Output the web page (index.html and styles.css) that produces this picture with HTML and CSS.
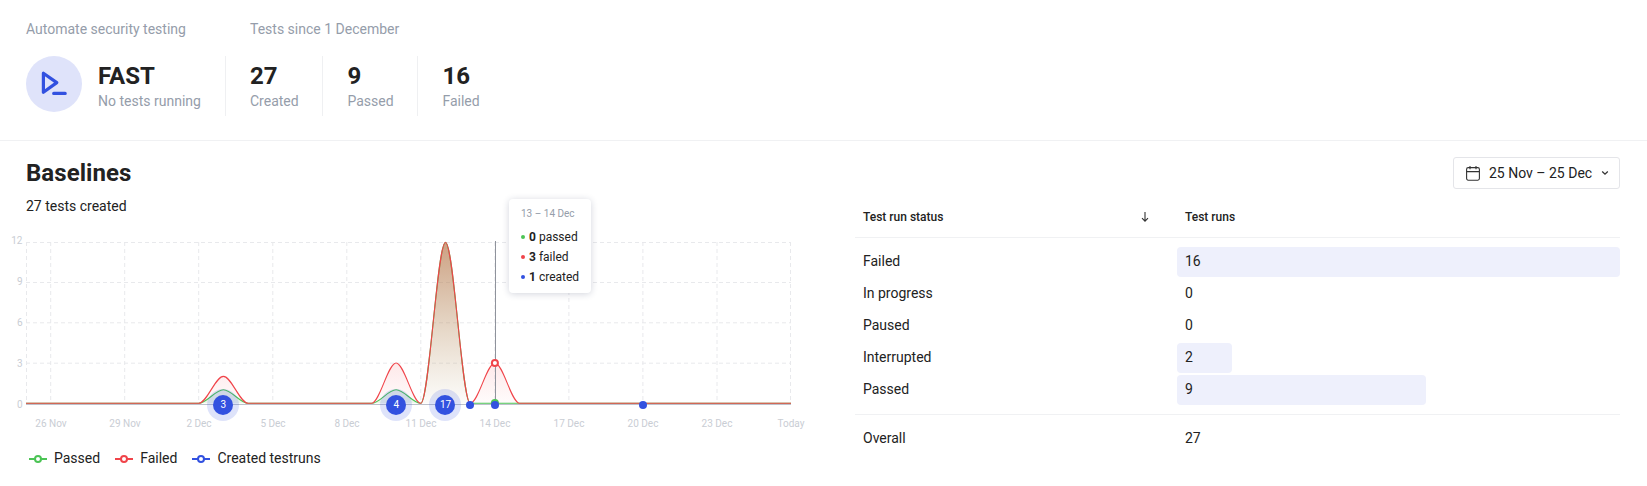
FILE: index.html
```html
<!DOCTYPE html>
<html lang="en">
<head>
<meta charset="utf-8">
<title>FAST dashboard</title>
<link rel="stylesheet" href="styles.css">
</head>
<body>
<header class="summary">
  <section class="summary-group product">
    <p class="caption">Automate security testing</p>
    <div class="stats">
      <div class="stat stat-product">
        <svg class="logo" width="56" height="56" viewBox="0 0 56 56" fill="none" stroke="#3251e0" stroke-width="3.2" stroke-linecap="round" stroke-linejoin="round">
          <circle cx="28" cy="28" r="28" fill="#dfe3fa" stroke="none"/>
          <path d="M17.4 17.2 30.8 26.6 17.4 36.2ZM27.7 37.4H39.2"/>
        </svg>
        <div><h2 class="value">FAST</h2><p class="name">No tests running</p></div>
      </div>
    </div>
  </section>
  <section class="summary-group">
    <p class="caption tests">Tests since 1 December</p>
    <div class="stats">
      <div class="stat"><h2 class="value">27</h2><p class="name">Created</p></div>
      <div class="stat"><h2 class="value">9</h2><p class="name">Passed</p></div>
      <div class="stat"><h2 class="value">16</h2><p class="name">Failed</p></div>
    </div>
  </section>
</header>
<main class="content">
  <section class="baselines">
    <h1 class="title">Baselines</h1>
    <p class="subtitle">27 tests created</p>
    <div class="chart">
      <svg class="plot" width="820" height="210" viewBox="0 225 820 210">
        <defs>
          <linearGradient id="lowfill" gradientUnits="userSpaceOnUse" x1="0" y1="363" x2="0" y2="403"><stop offset="0" stop-color="#f0444a" stop-opacity=".12"/><stop offset="1" stop-color="#f0444a" stop-opacity=".02"/></linearGradient>
          <linearGradient id="peakfill" gradientUnits="userSpaceOnUse" x1="0" y1="242" x2="0" y2="403"><stop offset="0" stop-color="#b97a50" stop-opacity=".72"/><stop offset="1" stop-color="#b9a070" stop-opacity=".04"/></linearGradient>
        </defs>
        <g class="grid-h">
          <path d="M26 242.5H791M26 282.5H791M26 322.8H791M26 363.2H791"/>
        </g>
        <g class="grid-v">
          <path d="M50.7 242V403M124.7 242V403M198.7 242V403M272.8 242V403M346.8 242V403M420.8 242V403M494.9 242V403M568.9 242V403M642.9 242V403M717 242V403"/>
          <path class="edge" d="M26.5 242V403M790.5 242V403"/>
        </g>
        <path class="axis" d="M26 404.5H791"/>
        <path fill="#4cc455" fill-opacity=".1" d="M198.7 403.3C206.9 403.3 215.2 390 223.4 390S239.9 403.3 248.1 403.3ZM371.5 403.3C379.7 403.3 387.9 390 396.1 390S412.6 403.3 420.8 403.3Z"/>
        <path fill="url(#lowfill)" d="M198.7 403.3C206.9 403.3 215.2 376.4 223.4 376.4S239.9 403.3 248.1 403.3ZM371.5 403.3C379.7 403.3 387.9 363 396.1 363S412.6 403.3 420.8 403.3ZM470.2 403.3C478.4 403.3 486.7 363 494.9 363S511.4 403.3 519.6 403.3Z"/>
        <path fill="url(#peakfill)" d="M420.8 403.3C429 403.3 437.3 242.3 445.5 242.3S462 403.3 470.2 403.3Z"/>
        <path class="passed-line" d="M26 403.3H198.7C206.9 403.3 215.2 389.8 223.4 389.8S239.9 403.3 248.1 403.3H371.5C379.7 403.3 387.9 389.8 396.1 389.8S412.6 403.3 420.8 403.3C429 403.3 437.3 242.3 445.5 242.3S462 403.3 470.2 403.3H791"/>
        <path class="failed-line" d="M26 403.3H198.7C206.9 403.3 215.2 376.4 223.4 376.4S239.9 403.3 248.1 403.3H371.5C379.7 403.3 387.9 363 396.1 363S412.6 403.3 420.8 403.3C429 403.3 437.3 242.3 445.5 242.3S462 403.3 470.2 403.3C478.4 403.3 486.7 363 494.9 363S511.4 403.3 519.6 403.3H791"/>
        <path class="cursor" d="M495.5 241V404"/>
        <circle cx="494.9" cy="403" r="4" fill="#4cc455"/>
        <circle cx="494.9" cy="363" r="3" fill="#fff" stroke="#f0444a" stroke-width="2"/>
        <g class="halo"><circle cx="223" cy="405" r="16"/><circle cx="396" cy="405" r="16"/><circle cx="445" cy="405" r="16"/></g>
        <g class="dot"><circle cx="223" cy="405" r="10"/><circle cx="396" cy="405" r="10"/><circle cx="445" cy="405" r="10"/><circle cx="470" cy="405" r="4"/><circle cx="495" cy="405" r="4"/><circle cx="643" cy="405" r="4"/></g>
        <g class="count"><text x="223.3" y="408">3</text><text x="396.2" y="408">4</text><text x="445.5" y="408">17</text></g>
        <g class="y-labels"><text x="22.5" y="244">12</text><text x="22.5" y="285">9</text><text x="22.5" y="326">6</text><text x="22.5" y="367">3</text><text x="22.5" y="408">0</text></g>
        <g class="x-labels"><text x="51" y="427">26 Nov</text><text x="125" y="427">29 Nov</text><text x="199" y="427">2 Dec</text><text x="273" y="427">5 Dec</text><text x="347" y="427">8 Dec</text><text x="421" y="427">11 Dec</text><text x="495" y="427">14 Dec</text><text x="569" y="427">17 Dec</text><text x="643" y="427">20 Dec</text><text x="717" y="427">23 Dec</text><text x="791" y="427">Today</text></g>
      </svg>
      <div class="tooltip">
        <p class="tooltip-date">13 – 14 Dec</p>
        <p class="tooltip-row passed"><b>0</b> passed</p>
        <p class="tooltip-row failed"><b>3</b> failed</p>
        <p class="tooltip-row created"><b>1</b> created</p>
      </div>
    </div>
    <ul class="legend">
      <li class="passed"><svg width="18" height="8"><path d="M0 4H18"/><circle cx="9" cy="4" r="3"/></svg>Passed</li>
      <li class="failed"><svg width="18" height="8"><path d="M0 4H18"/><circle cx="9" cy="4" r="3"/></svg>Failed</li>
      <li class="created"><svg width="18" height="8"><path d="M0 4H18"/><circle cx="9" cy="4" r="3"/></svg>Created testruns</li>
    </ul>
  </section>
  <section class="runs">
    <button class="period">
      <svg width="14" height="15" viewBox="0 0 14 15" fill="none" stroke="#333" stroke-width="1.1"><rect x=".6" y="1.6" width="12.8" height="12.6" rx="1.6"/><path d="M.6 5.6H13.4M4 0V3.2M10 0V3.2"/></svg>
      <span>25 Nov – 25 Dec</span>
      <svg width="8" height="6" viewBox="0 0 8 6" fill="none" stroke="#333" stroke-width="1.3"><path d="M1.2 1.6 4 4.2 6.8 1.6"/></svg>
    </button>
    <div class="table">
      <div class="row head"><span class="status">Test run status<svg class="sort" width="8" height="10" viewBox="0 0 8 10" fill="none" stroke="#333" stroke-width="1.1"><path d="M4 0V9M1 6.2 4 9.2 7 6.2"/></svg></span><span class="cell">Test runs</span></div>
      <div class="rows">
        <div class="row"><span class="status">Failed</span><span class="cell bar" style="width:443px">16</span></div>
        <div class="row"><span class="status">In progress</span><span class="cell">0</span></div>
        <div class="row"><span class="status">Paused</span><span class="cell">0</span></div>
        <div class="row"><span class="status">Interrupted</span><span class="cell bar" style="width:55px">2</span></div>
        <div class="row"><span class="status">Passed</span><span class="cell bar" style="width:249px">9</span></div>
      </div>
      <div class="row total"><span class="status">Overall</span><span class="cell">27</span></div>
    </div>
  </section>
</main>
</body>
</html>
```
FILE: styles.css
```css
* { box-sizing: border-box; margin: 0; padding: 0; }
body { width: 1647px; height: 486px; overflow: hidden; background: #fff; color: #222; font: 14px/20px Roboto, sans-serif; }
svg { display: block; flex: none; }

.summary { display: flex; height: 141px; padding: 19px 26px 0; border-bottom: 1px solid #f0f1f3; }
.product { width: 199px; }
.caption, .name { color: #959daa; white-space: nowrap; }
.caption.tests { padding-left: 25px; }
.stats { display: flex; margin-top: 17px; }
.stat { height: 60px; padding: 4px 23.8px 0 24px; border-left: 1px solid #eff0f2; }
.stat-product { display: flex; gap: 16px; padding: 4px 0 0; border: 0; }
.logo { margin-top: -4px; }
.value { font-size: 24px; line-height: 32px; font-weight: 700; }
.name { margin-top: -1px; }

.content { display: flex; height: 345px; }
.baselines { width: 855px; padding-top: 16px; }
.title { padding-left: 26px; font-size: 24px; line-height: 32px; font-weight: 700; letter-spacing: .05px; }
.subtitle { padding-left: 26px; margin-top: 7px; }
.chart { position: relative; margin-top: 9px; }
.grid-h { fill: none; stroke: #e8e9ec; stroke-dasharray: 4 3; }
.grid-v { fill: none; stroke: #e8e9ec; stroke-dasharray: 4 3; }
.axis { stroke: #bdc1cb; }
.passed-line, .failed-line { fill: none; stroke: #4cc455; stroke-width: 1.1; }
.failed-line { stroke: #f0444a; }
.cursor { stroke: #8f939c; }
.halo { fill: #3251e0; fill-opacity: .16; }
.dot { fill: #3251e0; }
.count { fill: #fff; font-size: 10px; font-weight: 400; text-anchor: middle; }
.y-labels { fill: #c9cdd4; font-size: 10px; text-anchor: end; }
.x-labels { fill: #c9cdd4; font-size: 10px; text-anchor: middle; }
.tooltip { position: absolute; left: 509px; top: -26px; width: 82px; height: 94px; padding: 7px 0 7px 12px; border-radius: 4px; background: #fff; box-shadow: 0 1px 7px rgba(30, 40, 80, .2); white-space: nowrap; }
.tooltip-date { margin-bottom: 5px; color: #959daa; font-size: 10px; line-height: 16px; }
.tooltip-row { display: flex; align-items: center; font-size: 12px; line-height: 20px; }
.tooltip-row b { margin-right: 3px; }
.tooltip-row::before { flex: none; width: 4px; height: 4px; margin-right: 4px; border-radius: 50%; content: ""; }
.tooltip-row.passed::before { background: #4cc455; }
.tooltip-row.failed::before { background: #f0444a; }
.tooltip-row.created::before { background: #3251e0; }
.legend { display: flex; gap: 15px; margin-top: 13px; padding-left: 29px; list-style: none; }
.legend li { display: flex; align-items: center; gap: 7px; }
.legend svg { margin-top: 2px; fill: #fff; stroke: #4cc455; stroke-width: 2; }
.legend .failed svg { stroke: #f0444a; }
.legend .created svg { stroke: #3251e0; }

.runs { width: 765px; padding-top: 16px; }
.period { display: flex; align-items: center; gap: 9px; width: 167px; height: 32px; margin-left: auto; padding: 0 12px; border: 1px solid #e4e5e9; border-radius: 3px; background: #fff; color: #222; font: inherit; white-space: nowrap; }
.period span { padding-bottom: 1px; }
.row { display: flex; align-items: center; height: 32px; }
.status { display: flex; align-items: center; width: 322px; padding: 0 0 2px 8px; }
.cell { height: 30px; padding-left: 8px; line-height: 28px; }
.bar { border-radius: 4px; background: #eef0fc; }
.head { height: 49px; padding-top: 9px; border-bottom: 1px solid #f0f1f3; font-size: 12px; font-weight: 500; }
.sort { margin-left: auto; margin-right: 28px; }
.rows { padding: 8px 0; border-bottom: 1px solid #f0f1f3; }
.total { height: 47px; }
```
